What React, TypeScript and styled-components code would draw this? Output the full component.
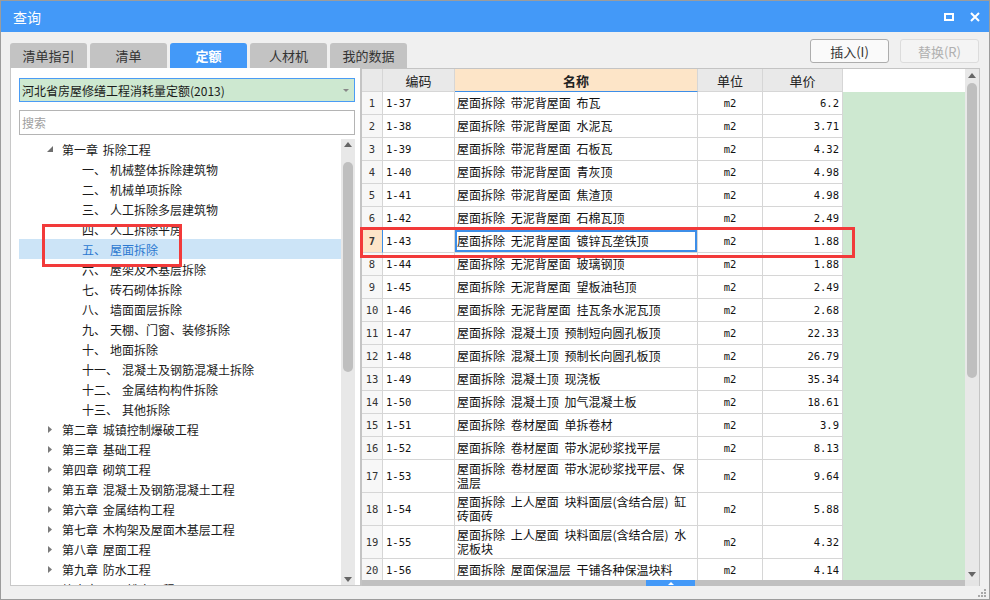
import React from 'react';
import styled, { createGlobalStyle } from 'styled-components';

const GlobalStyle = createGlobalStyle`
  html, body {
    margin: 0;
    padding: 0;
    background: #fff;
  }
  body {
    font-family: "Noto Sans CJK SC", "Noto Sans", sans-serif;
    color: #1a1a1a;
  }
  * {
    box-sizing: border-box;
  }
`;

const CJK = `"Noto Sans CJK SC", "Noto Sans", sans-serif`;
const MONO = `"DejaVu Sans Mono", "Liberation Mono", "Noto Sans CJK SC", monospace`;
const BLUE = '#4399f8';
const FOCUS = '#3d8ee8';
const GREEN = '#cde8d0';
const PEACH = '#fde5c8';
const LINE = '#d6d6d6';

const Window = styled.div`
  width: 990px;
  height: 600px;
  border: 1px solid #9c9c9c;
  background: #f0f0f0;
  display: flex;
  flex-direction: column;
  position: relative;
  overflow: hidden;
`;

const TitleBar = styled.div`
  height: 31px;
  flex-shrink: 0;
  background: ${BLUE};
  color: #fff;
  display: flex;
  align-items: center;
  padding: 0 9px 0 12px;
  font-family: ${CJK};
  font-size: 14px;
`;

const TitleIcons = styled.div`
  margin-left: auto;
  display: flex;
  align-items: center;
  gap: 16px;
`;

const Body = styled.div`
  flex: 1;
  min-height: 0;
  display: flex;
  flex-direction: column;
  padding: 7px 9px 13px 9px;
`;

const TopRow = styled.div`
  height: 29px;
  flex-shrink: 0;
  display: flex;
  align-items: flex-start;
`;

const TabBar = styled.div`
  align-self: flex-end;
  display: flex;
  gap: 3px;
`;

const Tab = styled.div<{ $active?: boolean }>`
  width: 77px;
  height: 25px;
  border-radius: 3px 3px 0 0;
  background: ${({ $active }) => ($active ? BLUE : '#c3c3c3')};
  color: ${({ $active }) => ($active ? '#fff' : '#333')};
  font-weight: ${({ $active }) => ($active ? 700 : 400)};
  font-size: 13px;
  display: flex;
  align-items: center;
  justify-content: center;
`;

const ButtonGroup = styled.div`
  margin-left: auto;
  margin-right: 1px;
  display: flex;
  gap: 11px;
`;

const ActionButton = styled.button<{ $disabled?: boolean }>`
  width: 79px;
  height: 24px;
  border-radius: 3px;
  border: 1px solid ${({ $disabled }) => ($disabled ? '#dcdcdc' : '#adadad')};
  background: ${({ $disabled }) => ($disabled ? '#f4f4f4' : '#fafafa')};
  color: ${({ $disabled }) => ($disabled ? '#b0b0b0' : '#333')};
  font-family: ${CJK};
  font-size: 13px;
  padding: 0;
  cursor: default;
`;

const Panels = styled.div`
  flex: 1;
  min-height: 0;
  display: flex;
`;

const LeftPanel = styled.div`
  width: 350px;
  flex-shrink: 0;
  background: #fff;
  border-left: 1px solid #c8c8c8;
  border-bottom: 1px solid #c8c8c8;
  display: flex;
  flex-direction: column;
  padding: 10px 5px 0 8px;
`;

const LibrarySelect = styled.div`
  height: 24px;
  flex-shrink: 0;
  border: 1px solid #4a9cf5;
  background: ${GREEN};
  display: flex;
  align-items: center;
  justify-content: space-between;
  padding: 0 5px 0 2px;
  font-size: 12px;
  color: #1a1a1a;
`;

const SearchInput = styled.input`
  margin-top: 8px;
  height: 25px;
  flex-shrink: 0;
  border: 1px solid #b4b4b4;
  background: #fff;
  padding: 0 2px;
  font-family: ${CJK};
  font-size: 12px;
  outline: none;
  &::placeholder {
    color: #a0a0a0;
  }
`;

const Tree = styled.div`
  flex: 1;
  min-height: 0;
  margin-top: 4px;
  display: flex;
`;

const TreeList = styled.div`
  flex: 1;
  overflow: hidden;
`;

const TreeRow = styled.div<{ $indent: number; $selected?: boolean }>`
  height: 20px;
  display: flex;
  align-items: center;
  padding-left: ${({ $indent }) => $indent}px;
  background: ${({ $selected }) => ($selected ? '#cce4f7' : 'transparent')};
  color: ${({ $selected }) => ($selected ? '#2b78d0' : '#1a1a1a')};
  font-size: 12px;
  white-space: nowrap;
  word-spacing: 2px;
`;

const Toggle = styled.span`
  width: 14px;
  margin-right: 5px;
  display: flex;
  align-items: center;
  justify-content: center;
`;

const ItemName = styled.span`
  margin-left: 4px;
`;

const ScrollTrack = styled.div<{ $width: number }>`
  width: ${({ $width }) => $width}px;
  flex-shrink: 0;
  background: #e8e8e8;
  display: flex;
  flex-direction: column;
  align-items: center;
`;

const ArrowBox = styled.div<{ $height: number }>`
  height: ${({ $height }) => $height}px;
  flex-shrink: 0;
  display: flex;
  align-items: center;
  justify-content: center;
`;

const Thumb = styled.div<{ $top: number; $height: number }>`
  width: 10px;
  height: ${({ $height }) => $height}px;
  margin-top: ${({ $top }) => $top}px;
  border-radius: 5px;
  background: #bfbfbf;
  flex-shrink: 0;
`;

const Spacer = styled.div`
  flex: 1;
`;

const GridFrame = styled.div`
  flex: 1;
  min-width: 0;
  display: grid;
  grid-template-columns: 1fr 14px;
  grid-template-rows: 1fr 6px;
  border-top: 1px solid #c4c4c4;
  border-left: 2px solid #c4c4c4;
  border-right: 1px solid #c4c4c4;
  background: #fff;
`;

const TableArea = styled.div`
  overflow: hidden;
  display: flex;
  flex-direction: column;
`;

const GridRow = styled.div<{ $height: number }>`
  height: ${({ $height }) => $height}px;
  flex-shrink: 0;
  display: grid;
  grid-template-columns: 21px 72px 243px 65px 80px 1fr;
`;

const Cell = styled.div<{ $align?: 'left' | 'center' | 'right' }>`
  border-right: 1px solid ${LINE};
  border-bottom: 1px solid ${LINE};
  display: flex;
  align-items: center;
  justify-content: ${({ $align }) =>
    $align === 'center' ? 'center' : $align === 'right' ? 'flex-end' : 'flex-start'};
  overflow: hidden;
  white-space: nowrap;
`;

const HeadCell = styled(Cell)<{ $main?: boolean }>`
  justify-content: center;
  background: ${({ $main }) => ($main ? PEACH : '#e9e9e9')};
  font-weight: ${({ $main }) => ($main ? 700 : 400)};
  font-size: 13px;
  color: #222;
  border-bottom-color: ${({ $main }) => ($main ? FOCUS : LINE)};
`;

const NumCell = styled(Cell)<{ $current?: boolean }>`
  justify-content: center;
  background: ${({ $current }) => ($current ? PEACH : '#f7f7f7')};
  font-family: ${MONO};
  font-size: 10.5px;
  font-weight: ${({ $current }) => ($current ? 700 : 400)};
  color: #333;
  border-right-color: ${({ $current }) => ($current ? FOCUS : LINE)};
`;

const MonoCell = styled(Cell)`
  font-family: ${MONO};
  font-size: 10.5px;
  color: #111;
  padding: 0 3px;
`;

const NameCell = styled(Cell)<{ $focused?: boolean }>`
  font-size: 12px;
  line-height: 14px;
  white-space: pre-line;
  word-spacing: 3px;
  padding: 0 2px;
  color: #111;
  box-shadow: ${({ $focused }) => ($focused ? `inset 0 0 0 2px ${FOCUS}` : 'none')};
`;

const Filler = styled.div<{ $head?: boolean }>`
  background: ${({ $head }) => ($head ? '#fff' : GREEN)};
`;

const HBar = styled.div`
  background: #c0c0c0;
  display: flex;
  padding-left: 284px;
`;

const HBarHandle = styled.div`
  width: 49px;
  background: ${BLUE};
  display: flex;
  align-items: center;
  justify-content: center;
`;

const Corner = styled.div`
  background: #e4e4e4;
`;

const Annotation = styled.div`
  position: absolute;
  border: 3px solid #f23a3a;
  pointer-events: none;
`;

const Grip = styled.svg`
  position: absolute;
  right: 3px;
  bottom: 2px;
`;

const UpArrow = () => (
  <svg width="8" height="5" viewBox="0 0 8 5">
    <polygon points="0,5 4,0 8,5" fill="#666" />
  </svg>
);

const DownArrow = () => (
  <svg width="8" height="5" viewBox="0 0 8 5">
    <polygon points="0,0 8,0 4,5" fill="#666" />
  </svg>
);

type TreeItem = {
  text: string;
  prefix?: string;
  chapter?: boolean;
  expanded?: boolean;
  selected?: boolean;
};

const treeItems: TreeItem[] = [
  { text: '第一章 拆除工程', chapter: true, expanded: true },
  { prefix: '一、', text: '机械整体拆除建筑物' },
  { prefix: '二、', text: '机械单项拆除' },
  { prefix: '三、', text: '人工拆除多层建筑物' },
  { prefix: '四、', text: '人工拆除平房' },
  { prefix: '五、', text: '屋面拆除', selected: true },
  { prefix: '六、', text: '屋架及木基层拆除' },
  { prefix: '七、', text: '砖石砌体拆除' },
  { prefix: '八、', text: '墙面面层拆除' },
  { prefix: '九、', text: '天棚、门窗、装修拆除' },
  { prefix: '十、', text: '地面拆除' },
  { prefix: '十一、', text: '混凝土及钢筋混凝土拆除' },
  { prefix: '十二、', text: '金属结构构件拆除' },
  { prefix: '十三、', text: '其他拆除' },
  { text: '第二章 城镇控制爆破工程', chapter: true },
  { text: '第三章 基础工程', chapter: true },
  { text: '第四章 砌筑工程', chapter: true },
  { text: '第五章 混凝土及钢筋混凝土工程', chapter: true },
  { text: '第六章 金属结构工程', chapter: true },
  { text: '第七章 木构架及屋面木基层工程', chapter: true },
  { text: '第八章 屋面工程', chapter: true },
  { text: '第九章 防水工程', chapter: true },
  { text: '第十章 屋面排水工程', chapter: true },
];

type Quota = { code: string; name: string; unit: string; price: string };

const quotas: Quota[] = [
  { code: '1-37', name: '屋面拆除 带泥背屋面 布瓦', unit: 'm2', price: '6.2' },
  { code: '1-38', name: '屋面拆除 带泥背屋面 水泥瓦', unit: 'm2', price: '3.71' },
  { code: '1-39', name: '屋面拆除 带泥背屋面 石板瓦', unit: 'm2', price: '4.32' },
  { code: '1-40', name: '屋面拆除 带泥背屋面 青灰顶', unit: 'm2', price: '4.98' },
  { code: '1-41', name: '屋面拆除 带泥背屋面 焦渣顶', unit: 'm2', price: '4.98' },
  { code: '1-42', name: '屋面拆除 无泥背屋面 石棉瓦顶', unit: 'm2', price: '2.49' },
  { code: '1-43', name: '屋面拆除 无泥背屋面 镀锌瓦垄铁顶', unit: 'm2', price: '1.88' },
  { code: '1-44', name: '屋面拆除 无泥背屋面 玻璃钢顶', unit: 'm2', price: '1.88' },
  { code: '1-45', name: '屋面拆除 无泥背屋面 望板油毡顶', unit: 'm2', price: '2.49' },
  { code: '1-46', name: '屋面拆除 无泥背屋面 挂瓦条水泥瓦顶', unit: 'm2', price: '2.68' },
  { code: '1-47', name: '屋面拆除 混凝土顶 预制短向圆孔板顶', unit: 'm2', price: '22.33' },
  { code: '1-48', name: '屋面拆除 混凝土顶 预制长向圆孔板顶', unit: 'm2', price: '26.79' },
  { code: '1-49', name: '屋面拆除 混凝土顶 现浇板', unit: 'm2', price: '35.34' },
  { code: '1-50', name: '屋面拆除 混凝土顶 加气混凝土板', unit: 'm2', price: '18.61' },
  { code: '1-51', name: '屋面拆除 卷材屋面 单拆卷材', unit: 'm2', price: '3.9' },
  { code: '1-52', name: '屋面拆除 卷材屋面 带水泥砂浆找平层', unit: 'm2', price: '8.13' },
  { code: '1-53', name: '屋面拆除 卷材屋面 带水泥砂浆找平层、保\n温层', unit: 'm2', price: '9.64' },
  { code: '1-54', name: '屋面拆除 上人屋面 块料面层(含结合层) 缸\n砖面砖', unit: 'm2', price: '5.88' },
  { code: '1-55', name: '屋面拆除 上人屋面 块料面层(含结合层) 水\n泥板块', unit: 'm2', price: '4.32' },
  { code: '1-56', name: '屋面拆除 屋面保温层 干铺各种保温块料', unit: 'm2', price: '4.14' },
];

const CURRENT_ROW = 7;

const App: React.FC = () => {
  return (
    <>
      <GlobalStyle />
      <Window>
        <TitleBar>
          查询
          <TitleIcons>
            <svg width="10" height="8" viewBox="0 0 10 8">
              <rect x="1" y="1" width="8" height="6" fill="none" stroke="#fff" strokeWidth="2" />
            </svg>
            <svg width="10" height="10" viewBox="0 0 10 10">
              <path d="M1 1 L9 9 M9 1 L1 9" stroke="#fff" strokeWidth="2" />
            </svg>
          </TitleIcons>
        </TitleBar>

        <Body>
          <TopRow>
            <TabBar>
              <Tab>清单指引</Tab>
              <Tab>清单</Tab>
              <Tab $active>定额</Tab>
              <Tab>人材机</Tab>
              <Tab>我的数据</Tab>
            </TabBar>
            <ButtonGroup>
              <ActionButton>插入(I)</ActionButton>
              <ActionButton $disabled>替换(R)</ActionButton>
            </ButtonGroup>
          </TopRow>

          <Panels>
            <LeftPanel>
              <LibrarySelect>
                <span>河北省房屋修缮工程消耗量定额(2013)</span>
                <svg width="6" height="3" viewBox="0 0 6 3">
                  <polygon points="0,0 6,0 3,3" fill="#888" />
                </svg>
              </LibrarySelect>
              <SearchInput placeholder="搜索" readOnly />
              <Tree>
                <TreeList>
                  {treeItems.map((item, i) =>
                    item.chapter ? (
                      <TreeRow key={i} $indent={24}>
                        <Toggle>
                          {item.expanded ? (
                            <svg width="6" height="6" viewBox="0 0 6 6">
                              <polygon points="6,0 6,6 0,6" fill="#6e6e6e" />
                            </svg>
                          ) : (
                            <svg width="4" height="7" viewBox="0 0 4 7">
                              <polygon points="0,0 4,3.5 0,7" fill="#7a7a7a" />
                            </svg>
                          )}
                        </Toggle>
                        {item.text}
                      </TreeRow>
                    ) : (
                      <TreeRow key={i} $indent={63} $selected={item.selected}>
                        <span>{item.prefix}</span>
                        <ItemName>{item.text}</ItemName>
                      </TreeRow>
                    )
                  )}
                </TreeList>
                <ScrollTrack $width={14}>
                  <ArrowBox $height={10}>
                    <UpArrow />
                  </ArrowBox>
                  <Thumb $top={13} $height={210} />
                  <Spacer />
                  <ArrowBox $height={12}>
                    <DownArrow />
                  </ArrowBox>
                </ScrollTrack>
              </Tree>
            </LeftPanel>

            <GridFrame>
              <TableArea>
                <GridRow $height={23}>
                  <HeadCell />
                  <HeadCell>编码</HeadCell>
                  <HeadCell $main>名称</HeadCell>
                  <HeadCell>单位</HeadCell>
                  <HeadCell>单价</HeadCell>
                  <Filler $head />
                </GridRow>
                {quotas.map((q, i) => {
                  const n = i + 1;
                  const current = n === CURRENT_ROW;
                  const tall = q.name.includes('\n');
                  return (
                    <GridRow key={q.code} $height={tall ? 33 : 23}>
                      <NumCell $current={current}>{n}</NumCell>
                      <MonoCell>{q.code}</MonoCell>
                      <NameCell $focused={current}>{q.name}</NameCell>
                      <MonoCell $align="center">{q.unit}</MonoCell>
                      <MonoCell $align="right">{q.price}</MonoCell>
                      <Filler />
                    </GridRow>
                  );
                })}
              </TableArea>
              <ScrollTrack $width={14}>
                <ArrowBox $height={12}>
                  <UpArrow />
                </ArrowBox>
                <Thumb $top={2} $height={295} />
                <Spacer />
                <ArrowBox $height={12}>
                  <DownArrow />
                </ArrowBox>
              </ScrollTrack>
              <HBar>
                <HBarHandle>
                  <svg width="6" height="3" viewBox="0 0 6 3">
                    <polygon points="0,3 3,0 6,3" fill="#fff" />
                  </svg>
                </HBarHandle>
              </HBar>
              <Corner />
            </GridFrame>
          </Panels>
        </Body>

        <Annotation style={{ left: 41, top: 223, width: 140, height: 43 }} />
        <Annotation style={{ left: 359, top: 226, width: 495, height: 31 }} />

        <Grip width="9" height="9" viewBox="0 0 9 9">
          <rect x="7" y="1" width="2" height="2" fill="#a8a8a8" />
          <rect x="4" y="4" width="2" height="2" fill="#a8a8a8" />
          <rect x="7" y="4" width="2" height="2" fill="#a8a8a8" />
          <rect x="1" y="7" width="2" height="2" fill="#a8a8a8" />
          <rect x="4" y="7" width="2" height="2" fill="#a8a8a8" />
          <rect x="7" y="7" width="2" height="2" fill="#a8a8a8" />
        </Grip>
      </Window>
    </>
  );
};

export default App;
